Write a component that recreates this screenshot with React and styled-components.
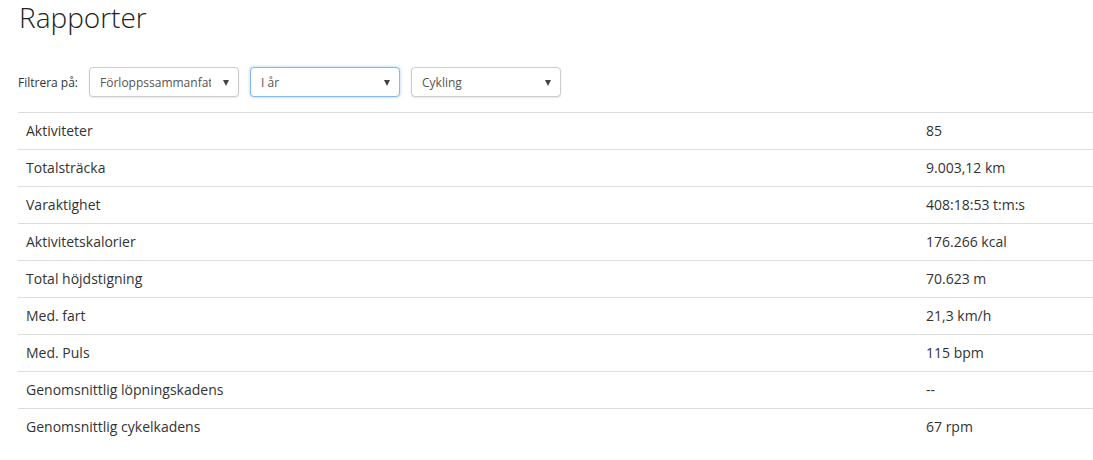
import React from "react";
import styled, { createGlobalStyle, css } from "styled-components";

const Global = createGlobalStyle`
  html, body {
    margin: 0;
    padding: 0;
    background: #fff;
  }
  body {
    font-family: "Open Sans", "Liberation Sans", sans-serif;
    color: #333;
  }
`;

const Page = styled.div`
  padding-left: 18px;
`;

const Title = styled.h1`
  margin: 0;
  font-size: 28px;
  font-weight: 300;
  line-height: 34px;
  color: #222;
  padding-left: 1px;
`;

const FilterBar = styled.div`
  display: flex;
  align-items: center;
  gap: 11px;
  margin-top: 33px;
  height: 30px;
`;

const FilterLabel = styled.span`
  font-size: 12px;
  color: #333;
`;

const SelectWrap = styled.div`
  position: relative;
  width: 150px;
  height: 30px;

  &::after {
    content: "";
    position: absolute;
    right: 10px;
    top: 13px;
    border-left: 3px solid transparent;
    border-right: 3px solid transparent;
    border-top: 6px solid #444;
    pointer-events: none;
  }
`;

const Select = styled.select`
  appearance: none;
  -webkit-appearance: none;
  box-sizing: border-box;
  width: 100%;
  height: 30px;
  padding: 0 27px 0 10px;
  font-family: "Open Sans", "Liberation Sans", sans-serif;
  font-size: 12px;
  color: #555;
  background: #fff;
  border: 1px solid #ccc;
  border-radius: 4px;
  box-shadow: 0 1px 2px rgba(0, 0, 0, 0.1);
  outline: none;
  ${(p) =>
    p.$focused &&
    css`
      border-color: #86b7ee;
      box-shadow: 0 0 3px rgba(102, 160, 233, 0.6);
    `}
`;

const Table = styled.table`
  width: 100%;
  margin-top: 15px;
  border-collapse: collapse;
  font-size: 14px;
  color: #333;
`;

const Row = styled.tr`
  border-top: 1px solid #ddd;
`;

const Cell = styled.td`
  padding: 8px;
  line-height: 20px;
  vertical-align: top;
  ${(p) => p.$label && css`width: 884px;`}
`;

const filters = [
  { value: "Förloppssammanfattning", focused: false },
  { value: "I år", focused: true },
  { value: "Cykling", focused: false },
];

const stats = [
  ["Aktiviteter", "85"],
  ["Totalsträcka", "9.003,12 km"],
  ["Varaktighet", "408:18:53 t:m:s"],
  ["Aktivitetskalorier", "176.266 kcal"],
  ["Total höjdstigning", "70.623 m"],
  ["Med. fart", "21,3 km/h"],
  ["Med. Puls", "115 bpm"],
  ["Genomsnittlig löpningskadens", "--"],
  ["Genomsnittlig cykelkadens", "67 rpm"],
];

export default function App() {
  return (
    <Page>
      <Global />
      <Title>Rapporter</Title>
      <FilterBar>
        <FilterLabel>Filtrera på:</FilterLabel>
        {filters.map((f) => (
          <SelectWrap key={f.value}>
            <Select $focused={f.focused} defaultValue={f.value}>
              <option>{f.value}</option>
            </Select>
          </SelectWrap>
        ))}
      </FilterBar>
      <Table>
        <tbody>
          {stats.map(([label, value]) => (
            <Row key={label}>
              <Cell $label>{label}</Cell>
              <Cell>{value}</Cell>
            </Row>
          ))}
        </tbody>
      </Table>
    </Page>
  );
}
